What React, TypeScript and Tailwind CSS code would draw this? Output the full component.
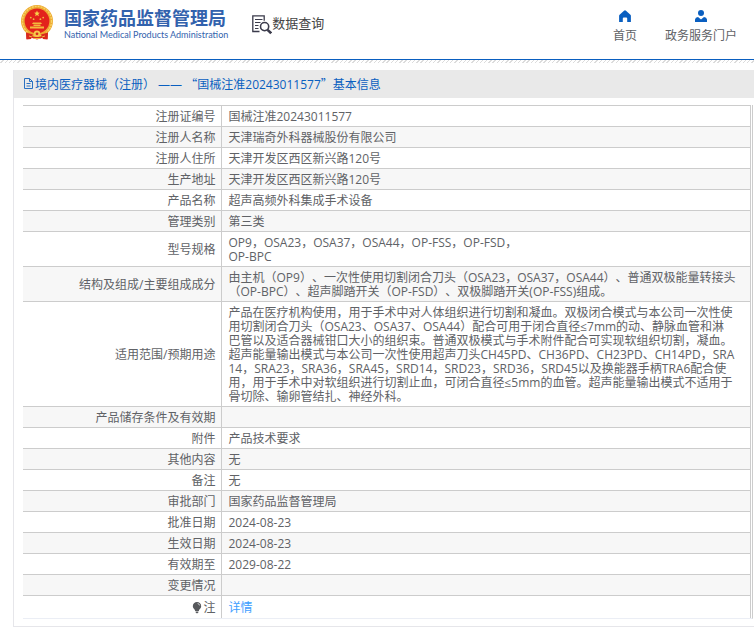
import { type ReactNode } from "react";

function Emblem() {
  return (
    <svg viewBox="0 0 32 35" className="h-[35px] w-8 shrink-0" aria-hidden="true">
      <path d="M5 25L27 25L26.500 34L21 33L16 34.500L11 33L5.500 34Z" fill="#d9281e" />
      <circle cx="16" cy="16" r="16" fill="#eda932" />
      <circle cx="16" cy="16" r="14.6" fill="none" stroke="#f8d465" strokeWidth="1.4" strokeDasharray="2 1" />
      <circle cx="16" cy="16" r="12.4" fill="#e3221c" />
      <path d="M16 5.600l.8 1.900 2.100.2-1.600 1.400.5 2.100-1.800-1.100-1.800 1.100.5-2.100-1.600-1.400 2.100-.2z" fill="#f8d24a" />
      <g fill="#f3b93d">
        <circle cx="9.8" cy="12.600" r=".9" />
        <circle cx="12.600" cy="14.200" r=".9" />
        <circle cx="19.400" cy="14.200" r=".9" />
        <circle cx="22.200" cy="12.600" r=".9" />
        <path d="M12 17.500h8l1 1.600H11zM12.500 19.500h7v1.600h-7zM9 21.600h14v2H9z" />
      </g>
      <path d="M6 26.500q10 3 20 0l-2 3.500H8z" fill="#eda932" />
      <circle cx="16" cy="28.800" r="3.200" fill="#f6c94c" />
      <circle cx="16" cy="28.800" r="1.400" fill="#d9281e" />
      <path d="M5 27.500l7 2-2 4.500-4.500.5zM27 27.500l-7 2 2 4.500 4.500.5z" fill="#d9281e" />
      <path d="M8 31l3 1M24 31l-3 1M13 33.500h6" stroke="#f3b93d" strokeWidth="1" />
    </svg>
  );
}

function SearchDocIcon() {
  return (
    <svg viewBox="0 0 20 20" className="size-5 shrink-0" fill="none" stroke="#3b3b4b" aria-hidden="true">
      <path d="M7.500 16.500H.8V.8h11.400v5" strokeWidth="1.3" />
      <path d="M3 4.500h7.500M3 7.500h5.500M3 10.500h3.500M3 13.500h3.500" strokeWidth="1" />
      <circle cx="12.600" cy="11.600" r="4.100" strokeWidth="1.6" />
      <path d="M15.600 14.800l3.600 3.600" strokeWidth="2.6" />
    </svg>
  );
}

function HomeIcon() {
  return (
    <svg viewBox="0 0 12 12" className="size-3" aria-hidden="true">
      <path
        d="M6 .3q.5 0 1 .4l4.400 4q.5.5.5 1V12H8.200V8.400q0-1-1-1H4.800q-1 0-1 1V12H.1V5.700q0-.5.5-1L5 .7q.5-.4 1-.4z"
        fill="#0a5fc0"
      />
    </svg>
  );
}

function UserIcon() {
  return (
    <svg viewBox="0 0 12 12" className="size-3" aria-hidden="true">
      <circle cx="6" cy="3.100" r="3" fill="#0a5fc0" />
      <path d="M0 12V9.600Q.3 7.300 3 7l3 2.600L9 7q2.700.3 3 2.600V12z" fill="#0a5fc0" />
    </svg>
  );
}

function FileIcon() {
  return (
    <svg viewBox="0 0 12 12" className="size-3 shrink-0" fill="none" stroke="#2a70c2" strokeWidth="1" aria-hidden="true">
      <path d="M1.500.5h5l3 3v7h-8zM6.500.5v3h3M3.500 5.500h4M3.500 8h4" />
    </svg>
  );
}

function BulbIcon() {
  return (
    <svg viewBox="0 0 10 12" className="h-3 w-[10px]" aria-hidden="true">
      <path
        d="M5 0a4.200 4.200 0 0 1 4.200 4.300C9.200 6.500 7 7.300 6.800 9H3.200C3 7.300.8 6.500.8 4.300A4.200 4.200 0 0 1 5 0z"
        fill="#56585c"
      />
      <path d="M3.600 9.600h2.800v.8L5 11.500l-1.400-1.100z" fill="#56585c" />
      <path d="M5.600 1.500q1.800.3 2.100 2" stroke="#fff" strokeWidth=".7" fill="none" />
    </svg>
  );
}

const rows: { label: ReactNode; value: string[] }[] = [
  { label: "注册证编号", value: ["国械注准20243011577"] },
  { label: "注册人名称", value: ["天津瑞奇外科器械股份有限公司"] },
  { label: "注册人住所", value: ["天津开发区西区新兴路120号"] },
  { label: "生产地址", value: ["天津开发区西区新兴路120号"] },
  { label: "产品名称", value: ["超声高频外科集成手术设备"] },
  { label: "管理类别", value: ["第三类"] },
  { label: "型号规格", value: ["OP9，OSA23，OSA37，OSA44，OP-FSS，OP-FSD，", "OP-BPC"] },
  {
    label: "结构及组成/主要组成成分",
    value: [
      "由主机（OP9）、一次性使用切割闭合刀头（OSA23，OSA37，OSA44）、普通双极能量转接头",
      "（OP-BPC）、超声脚踏开关（OP-FSD）、双极脚踏开关(OP-FSS)组成。",
    ],
  },
  {
    label: "适用范围/预期用途",
    value: [
      "产品在医疗机构使用，用于手术中对人体组织进行切割和凝血。双极闭合模式与本公司一次性使",
      "用切割闭合刀头（OSA23、OSA37、OSA44）配合可用于闭合直径≤7mm的动、静脉血管和淋",
      "巴管以及适合器械钳口大小的组织束。普通双极模式与手术附件配合可实现软组织切割，凝血。",
      "超声能量输出模式与本公司一次性使用超声刀头CH45PD、CH36PD、CH23PD、CH14PD，SRA",
      "14，SRA23，SRA36，SRA45，SRD14，SRD23，SRD36，SRD45以及换能器手柄TRA6配合使",
      "用，用于手术中对软组织进行切割止血，可闭合直径≤5mm的血管。超声能量输出模式不适用于",
      "骨切除、输卵管结扎、神经外科。",
    ],
  },
  { label: "产品储存条件及有效期", value: [] },
  { label: "附件", value: ["产品技术要求"] },
  { label: "其他内容", value: ["无"] },
  { label: "备注", value: ["无"] },
  { label: "审批部门", value: ["国家药品监督管理局"] },
  { label: "批准日期", value: ["2024-08-23"] },
  { label: "生效日期", value: ["2024-08-23"] },
  { label: "有效期至", value: ["2029-08-22"] },
  { label: "变更情况", value: [] },
];

export default function App() {
  return (
    <div
      lang="zh-CN"
      className="overflow-x-hidden bg-white pb-2 font-['Open_Sans','Noto_Sans_CJK_SC',sans-serif] text-xs text-[#606266] [text-spacing-trim:space-all]"
    >
      <header className="flex h-[59px] items-start justify-between pr-[17px] pl-[21px]">
        <div className="flex">
          <a href="#" className="flex gap-[11px] pt-[5px]">
            <Emblem />
            <span className="flex flex-col pt-[3px] text-[#3262ad]">
              <span className="text-[18px] leading-5 font-bold whitespace-nowrap">国家药品监督管理局</span>
              <span className="pt-px font-['Lato',sans-serif] text-[9px] leading-3 whitespace-nowrap">
                National Medical Products Administration
              </span>
            </span>
          </a>
          <h1 className="ml-6 flex pt-[15px] text-[13px] leading-4 text-[#444]">
            <SearchDocIcon />
            <span className="whitespace-nowrap">数据查询</span>
          </h1>
        </div>
        <nav className="flex gap-7 pt-[10px]">
          <a href="#" className="flex flex-col items-center gap-1.5 leading-4">
            <HomeIcon />
            首页
          </a>
          <a href="#" className="flex flex-col items-center gap-1.5 leading-4">
            <UserIcon />
            政务服务门户
          </a>
        </nav>
      </header>
      <div className="h-1 border-t border-[#0a5fc0] bg-[repeating-linear-gradient(135deg,#fff_0px,#fff_2px,#dcdcdc_2px,#dcdcdc_3px)]" />

      <main className="mt-[7px] ml-[13px] border-b border-l border-[#e6e6ea]">
        <h2 className="flex h-7 items-center bg-[#e9e9e9] pl-[9px] leading-4 text-[#0a5fc0]">
          <FileIcon />
          <span className="whitespace-nowrap">
            境内医疗器械（注册） ——{" "}
            <span className="font-['Noto_Sans_CJK_SC',sans-serif]">“</span>
            国械注准20243011577
            <span className="font-['Noto_Sans_CJK_SC',sans-serif]">”</span>
            基本信息
          </span>
        </h2>
        <div className="mt-[7px] mr-px mb-[7px] ml-[9px] border-r border-b border-r-[#ccc] border-b-[#ebeef5] pr-px">
          <table className="w-full table-fixed border-collapse leading-[14px]">
            <colgroup>
              <col className="w-[198px]" />
              <col />
            </colgroup>
            <tbody>
              {rows.map((row, i) => (
                <tr key={i} className="border-t border-[#ccc] even:bg-[#f7f7f7]">
                  <th scope="row" className="border-r border-[#ccc] pt-1 pr-[5px] pb-0.5 text-right font-normal">
                    {row.label}
                  </th>
                  <td className="h-[21px] border-r border-[#ccc] pt-1 pb-0.5 pl-[7px]">
                    {row.value.map((line, j) => (
                      <div key={j}>{line}</div>
                    ))}
                  </td>
                </tr>
              ))}
              <tr className="border-t border-[#ccc]">
                <th scope="row" className="border-r border-[#ccc] pt-[5px] pr-[5px] pb-[3px] font-normal">
                  <span className="flex items-center justify-end gap-px">
                    <BulbIcon />注
                  </span>
                </th>
                <td className="border-r border-[#ccc] pt-[5px] pb-[3px] pl-[7px]">
                  <a href="#" className="text-[#409eff]">
                    详情
                  </a>
                </td>
              </tr>
            </tbody>
          </table>
        </div>
      </main>
    </div>
  );
}
